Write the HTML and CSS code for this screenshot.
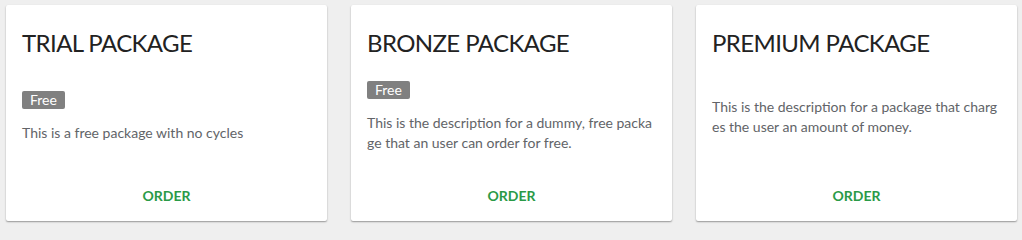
FILE: index.html
```html
<!DOCTYPE html>
<html>
<head>
<meta charset="utf-8">
<link rel="stylesheet" href="styles.css">
</head>
<body>
<div class="packages">
  <div class="card">
    <h2 class="title">TRIAL PACKAGE</h2>
    <div class="body">
      <span class="badge">Free</span>
      <p class="desc">This is a free package with no cycles</p>
    </div>
    <div class="footer"><span class="order">ORDER</span></div>
  </div>
  <div class="card">
    <h2 class="title">BRONZE PACKAGE</h2>
    <div class="body">
      <span class="badge">Free</span>
      <p class="desc">This is the description for a dummy, free package that an user can order for free.</p>
    </div>
    <div class="footer"><span class="order">ORDER</span></div>
  </div>
  <div class="card">
    <h2 class="title">PREMIUM PACKAGE</h2>
    <div class="body">
      <p class="desc">This is the description for a package that charges the user an amount of money.</p>
    </div>
    <div class="footer"><span class="order">ORDER</span></div>
  </div>
</div>
</body>
</html>
```
FILE: styles.css
```css
html, body {
  margin: 0;
  padding: 0;
  background: #efefef;
  font-family: Lato, "Open Sans", sans-serif;
}
.packages {
  display: grid;
  grid-template-columns: repeat(3, 321px);
  column-gap: 24px;
  padding: 5px 6px;
}
.card {
  background: #fff;
  border-radius: 2px;
  box-shadow: 0 1px 2px rgba(0,0,0,0.28), 0 1px 1px rgba(0,0,0,0.12);
  height: 216px;
  box-sizing: border-box;
  padding: 23px 16px 15px;
  display: flex;
  flex-direction: column;
}
.title {
  margin: 0;
  font-size: 24px;
  line-height: 29px;
  font-weight: 400;
  letter-spacing: -0.6px;
  color: #222;
}
.body {
  flex: 1;
  display: flex;
  flex-direction: column;
  justify-content: center;
  align-items: flex-start;
}
.badge {
  background: #808080;
  color: #fff;
  font-size: 14px;
  line-height: 18px;
  padding: 0 8px;
  border-radius: 2px;
  margin-bottom: 14px;
}
.desc {
  margin: 0;
  font-size: 14px;
  line-height: 20px;
  color: #626468;
  word-break: break-all;
}
.footer {
  margin-top: 9px;
  text-align: center;
}
.order {
  font-size: 14px;
  line-height: 20px;
  font-weight: 700;
  color: #2a9a47;
}
```
